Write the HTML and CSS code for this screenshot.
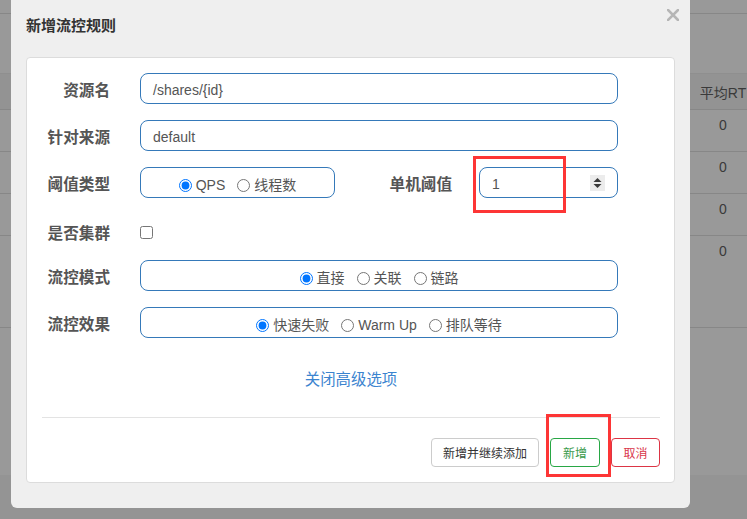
FILE: index.html
```html
<!DOCTYPE html>
<html>
<head>
<meta charset="utf-8">
<link rel="stylesheet" href="styles.css">
</head>
<body>
<div class="backdrop">
  <div class="bg-row r-top"></div>
  <div class="bg-row r-gap"></div>
  <div class="bg-row r-head"><span class="cell">平均RT</span></div>
  <div class="bg-row r-data"><span class="cell">0</span></div>
  <div class="bg-row r-data"><span class="cell">0</span></div>
  <div class="bg-row r-data"><span class="cell">0</span></div>
  <div class="bg-row r-tall"><span class="cell">0</span></div>
  <div class="bg-row r-fill"></div>
  <div class="bg-bottom"></div>
</div>

<div class="modal">
  <div class="modal-title">新增流控规则</div>
  <svg class="close" width="12" height="12" viewBox="0 0 12 12"><path d="M1 1L11 11M11 1L1 11" stroke="#b5b5b5" stroke-width="2.6" stroke-linecap="square"/></svg>
  <div class="card">
    <div class="row">
      <label class="lbl">资源名</label>
      <div class="field input"><span class="val">/shares/{id}</span></div>
    </div>
    <div class="row">
      <label class="lbl">针对来源</label>
      <div class="field input"><span class="val">default</span></div>
    </div>
    <div class="row">
      <label class="lbl">阈值类型</label>
      <div class="field radios small">
        <span class="opt"><input type="radio" name="t" checked><span>QPS</span></span>
        <span class="opt"><input type="radio" name="t"><span>线程数</span></span>
      </div>
      <label class="lbl2">单机阈值</label>
      <div class="field input num"><span class="val">1</span>
        <svg class="spin" width="15" height="16" viewBox="0 0 15 16"><rect width="15" height="16" fill="#ececec"/><path d="M3.5 7L7.5 3L11.5 7Z M3.5 9L7.5 13L11.5 9Z" fill="#3a3a3a"/></svg>
      </div>
    </div>
    <div class="row row-check">
      <label class="lbl">是否集群</label>
      <input type="checkbox" class="chk">
    </div>
    <div class="row">
      <label class="lbl">流控模式</label>
      <div class="field radios">
        <span class="opt"><input type="radio" name="m" checked><span>直接</span></span>
        <span class="opt"><input type="radio" name="m"><span>关联</span></span>
        <span class="opt"><input type="radio" name="m"><span>链路</span></span>
      </div>
    </div>
    <div class="row">
      <label class="lbl">流控效果</label>
      <div class="field radios">
        <span class="opt"><input type="radio" name="e" checked><span>快速失败</span></span>
        <span class="opt"><input type="radio" name="e"><span>Warm Up</span></span>
        <span class="opt"><input type="radio" name="e"><span>排队等待</span></span>
      </div>
    </div>
    <div class="adv"><a class="link">关闭高级选项</a></div>
    <div class="divider"></div>
    <div class="actions">
      <button class="btn">新增并继续添加</button>
      <button class="btn btn-ok">新增</button>
      <button class="btn btn-cancel">取消</button>
    </div>
  </div>
</div>

<div class="mark mark1"></div>
<div class="mark mark2"></div>
</body>
</html>
```

FILE: styles.css
```css
* { box-sizing: border-box; }
html, body { margin: 0; padding: 0; }
body {
  width: 747px;
  height: 519px;
  overflow: hidden;
  position: relative;
  background: #999999;
  font-family: "Liberation Sans", "Noto Sans CJK SC", sans-serif;
  font-size: 14px;
  color: #333;
}

/* backdrop table */
.backdrop { display: flex; flex-direction: column; height: 519px; }
.bg-row { border-bottom: 1px solid #878787; display: flex; justify-content: flex-end; align-items: center; color: #3a3a3a; }
.cell { width: 48px; text-align: center; font-size: 14px; }
.r-top { height: 14px; }
.r-gap { height: 60px; border-bottom: 1px solid #8f8f8f; }
.r-head { height: 36px; background: #939393; }
.r-data { height: 42px; align-items: flex-start; padding-top: 7px; }
.r-tall { height: 92px; align-items: flex-start; padding-top: 7px; }
.r-fill { height: 147px; border-bottom: none; }
.bg-bottom { flex: 1; background: #949494; }

/* modal */
.modal {
  position: absolute;
  left: 11px;
  top: 0;
  width: 679px;
  height: 508px;
  background: #efefef;
  border-radius: 0 0 6px 6px;
}
.modal-title {
  padding: 16px 0 0 15px;
  height: 57px;
  font-size: 15px;
  line-height: 20px;
  font-weight: bold;
  color: #333;
}
.close { position: absolute; right: 11px; top: 9px; }

.card {
  margin: 0 15px;
  height: 426px;
  background: #fff;
  border: 1px solid #dcdcdc;
  border-radius: 4px;
  padding: 15px 14px 15px 15px;
}
.row {
  display: flex;
  align-items: center;
  height: 31px;
  margin-bottom: 16px;
  padding-right: 42px;
}
.row-check { height: 30px; padding-top: 6px; }
.lbl, .lbl2 {
  font-size: 15.6px;
  font-weight: bold;
  color: #555;
  text-align: right;
  line-height: 20px;
  padding-top: 4px;
}
.lbl { width: 68px; margin-right: 30px; }
.lbl2 { width: 117px; margin-right: 27px; }

.field {
  flex: 1;
  height: 31px;
  border: 1px solid #3579b9;
  border-radius: 8px;
  display: flex;
  align-items: center;
  color: #555;
}
.input { padding-left: 12px; padding-top: 3px; }
.val { font-size: 14px; line-height: 20px; }
.num { position: relative; justify-content: space-between; padding-right: 12px; padding-top: 0; }
.num .val { padding-top: 3px; }
.spin { display: block; }

.radios { justify-content: center; gap: 12px; font-size: 14px; padding-top: 5px; }
.small { flex: 0 0 195px; }
.opt { display: flex; align-items: center; gap: 4px; line-height: 20px; }
.opt input { margin: 0; width: 13px; height: 13px; }

.chk { margin: 0; width: 13px; height: 13px; }

.adv { text-align: center; margin-top: 32px; line-height: 20px; height: 20px; }
.link { color: #3b84cf; font-size: 15.4px; }
.divider { margin-top: 27px; border-top: 1px solid #e3e3e3; }
.actions { display: flex; justify-content: flex-end; gap: 11px; margin-top: 20px; }
.btn {
  height: 29px;
  padding: 0 11px;
  font-family: "Liberation Sans", "Noto Sans CJK SC", sans-serif;
  font-size: 12px;
  background: #fff;
  border: 1px solid #cccccc;
  border-radius: 4px;
  color: #333;
}
.btn-ok { width: 50px; padding: 0; border-color: #28a745; color: #3a9a4c; }
.btn-cancel { width: 49px; padding: 0; border-color: #dc3545; color: #d9364a; }

/* annotation boxes */
.mark { position: absolute; border: 3px solid #fd3535; }
.mark1 { left: 473px; top: 156px; width: 93px; height: 57px; }
.mark2 { left: 546px; top: 414px; width: 65px; height: 63px; }
```
